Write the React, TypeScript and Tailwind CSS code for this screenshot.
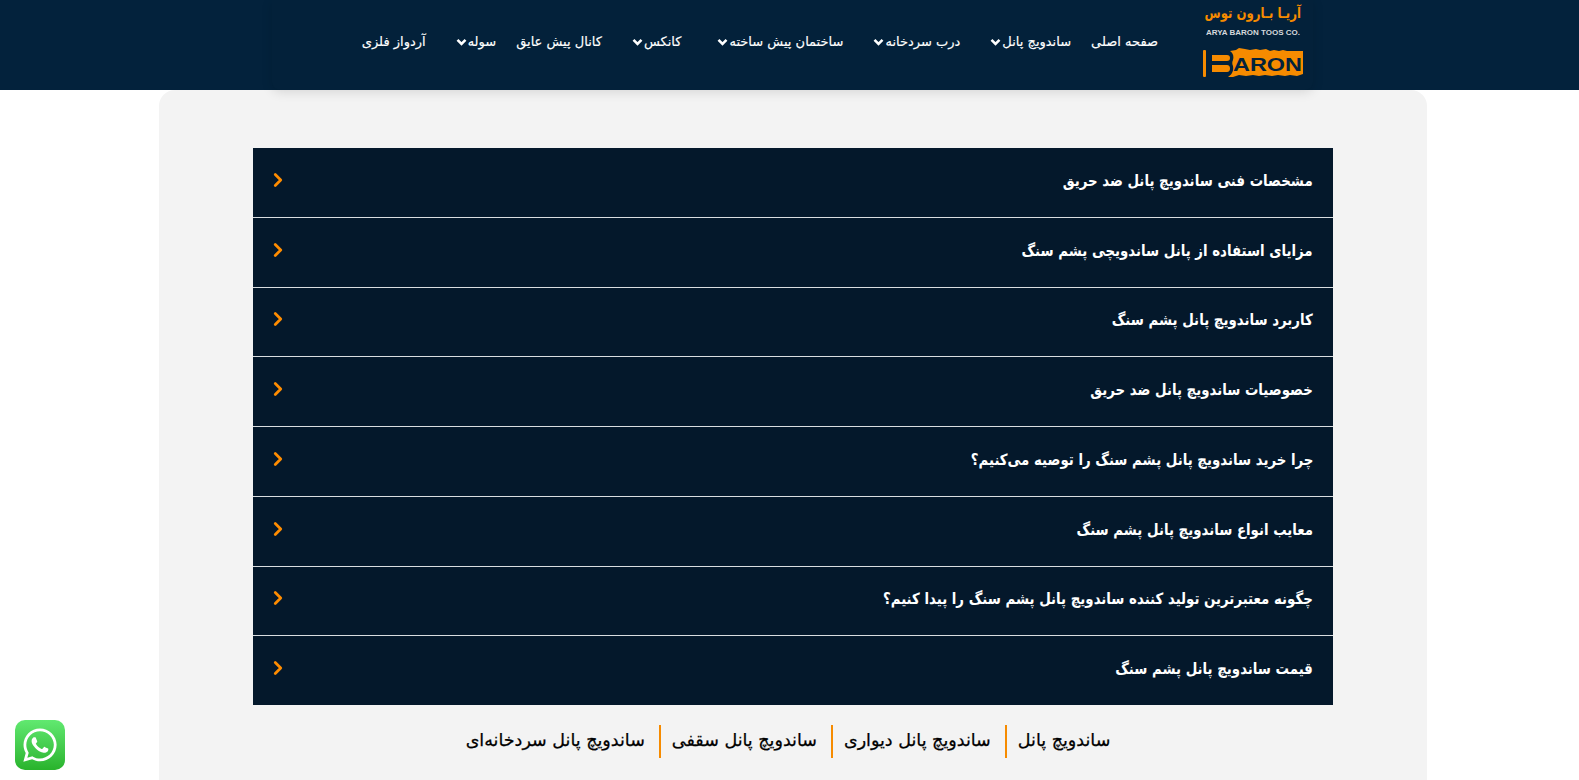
import React from 'react';
import { ChevronLeft } from 'lucide-react';
import { FaWhatsapp } from 'react-icons/fa';

const fontStack = { fontFamily: '"DejaVu Sans", "Noto Sans", sans-serif' };

const navItems = [
  { label: 'صفحه اصلی', pad: 'pl-[10px]', sub: false },
  { label: 'ساندویچ پانل', pad: 'pl-[20px]', sub: true },
  { label: 'درب سردخانه', pad: 'pl-[20px]', sub: true },
  { label: 'ساختمان پیش ساخته', pad: 'pl-[26px]', sub: true },
  { label: 'کانکس', pad: 'pl-[20px]', sub: true },
  { label: 'کانال پیش عایق', pad: 'pl-[10px]', sub: false },
  { label: 'سوله', pad: 'pl-[20px]', sub: true },
  { label: 'آردواز فلزی', pad: 'pl-[10px]', sub: false },
];

const questions = [
  'مشخصات فنی ساندویچ پانل ضد حریق',
  'مزایای استفاده از پانل ساندویچی پشم سنگ',
  'کاربرد ساندویچ پانل پشم سنگ',
  'خصوصیات ساندویچ پانل ضد حریق',
  'چرا خرید ساندویچ پانل پشم سنگ را توصیه می‌کنیم؟',
  'معایب انواع ساندویچ پانل پشم سنگ',
  'چگونه معتبرترین تولید کننده ساندویچ پانل پشم سنگ را پیدا کنیم؟',
  'قیمت ساندویچ پانل پشم سنگ',
];

const related = ['ساندویچ پانل', 'ساندویچ پانل دیواری', 'ساندویچ پانل سقفی', 'ساندویچ پانل سردخانه‌ای'];

const NavCaret = () => (
  <svg width="11" height="8" viewBox="0 0 11 8" className="shrink-0">
    <path d="M1.500 1.800 5.500 5.800 9.500 1.800" fill="none" stroke="currentColor" strokeWidth="2.600" />
  </svg>
);

const Logo = () => (
  <div className="w-[100px] h-[90px] shrink-0 flex flex-col items-center pt-[3px]">
    <span className="text-[15px] leading-[20px] font-bold text-[#f68b00] whitespace-nowrap inline-block scale-x-[0.78]">آریـا بـارون توس</span>
    <span className="mt-[5px] text-[8px] leading-[10px] font-bold text-[#d5d8dc] whitespace-nowrap" style={{ fontFamily: '"Liberation Sans", sans-serif' }} dir="ltr">
      ARYA BARON TOOS CO.
    </span>
    <div className="mt-[10px] w-[100px] h-[29px] flex" dir="ltr">
      <svg width="100" height="29" viewBox="0 0 100 29">
        <rect x="0" y="2" width="3" height="27" rx="1" fill="#f68b00" />
        <path d="M9 7h15c2 0 3 1 3 3s-1 3-3 3H9zM9 17h15c2 0 3 1.500 3 3.500s-1 3.500-3 3.500H9z" fill="#f68b00" />
        <path d="M27 3L33 2L36 0L42 1L47 2L53 1L57 2L63 1L67 3L71 2L76 3L80 2L84 3L100 3V26L94 28L87 27L82 28L75 27L69 28L62 27L56 28L50 27L43 28L36 27L30 29L25 29C28 27 31 24 30 18C29 16 29 14 30 12C31 8 30 5 27 3Z" fill="#f68b00" />
        <text x="30" y="23" fontSize="19" fontWeight="700" fill="#03223c" textLength="69" lengthAdjust="spacingAndGlyphs" style={{ fontFamily: '"Liberation Sans", sans-serif' }}>ARON</text>
      </svg>
    </div>
  </div>
);

export default function App() {
  return (
    <div dir="rtl" className="h-[780px] overflow-hidden bg-white relative" style={fontStack}>
      {/* Header */}
      <header className="h-[90px] bg-[#03223c] relative z-10">
        <div className="w-[1041px] h-[90px] mr-[266px] bg-[#03213a] shadow-[0_2px_12px_rgba(0,0,0,0.12)] rounded-b-[8px] flex items-start pr-[10px]">
          <Logo />
          <nav className="flex items-center h-[84px] mr-[35px] text-[13px] text-white whitespace-nowrap [-webkit-text-stroke:0.15px_white]">
            {navItems.map((item) => (
              <a key={item.label} className={`flex items-center gap-[1px] pr-[10px] ${item.pad}`}>
                <span>{item.label}</span>
                {item.sub && <NavCaret />}
              </a>
            ))}
          </nav>
        </div>
      </header>

      {/* Panel */}
      <main className="w-[1268px] h-[700px] mr-[152px] bg-[#f3f3f3] rounded-t-[16px] pt-[58px]">
        <div className="w-[1080px] mx-auto bg-[#04182b]">
          {questions.map((q, i) => (
            <div key={q} className={`flex items-center justify-between pr-[20px] pl-[14px] ${i < questions.length - 1 ? 'h-[69.75px] border-b border-[#d9dde0]' : 'h-[69.2px]'}`}>
              <span className="inline-block origin-right scale-x-[0.86] text-[15.5px] font-bold text-white mb-[2px]">{q}</span>
              <ChevronLeft className="w-[22px] h-[22px] text-[#ff8c00] rotate-180 mb-[5px]" strokeWidth={3} />
            </div>
          ))}
        </div>
        <div className="flex justify-center mr-[10px] mt-[20px] text-[17.5px] text-black whitespace-nowrap [-webkit-text-stroke:0.25px_black]">
          {related.map((r, i) => (
            <a key={r} className={`h-[33px] flex items-center pb-[4px] ${i > 0 ? 'pr-[14px]' : ''} ${i < related.length - 1 ? 'pl-[11px] border-l-2 border-[#f68b00]' : ''}`}>
              {r}
            </a>
          ))}
        </div>
      </main>

      {/* WhatsApp */}
      <a className="absolute left-[15px] top-[720px] w-[50px] h-[50px] rounded-[10px] bg-gradient-to-b from-[#61e970] to-[#28b32b] flex items-center justify-center text-white">
        <FaWhatsapp className="w-[38px] h-[38px]" />
      </a>
    </div>
  );
}
